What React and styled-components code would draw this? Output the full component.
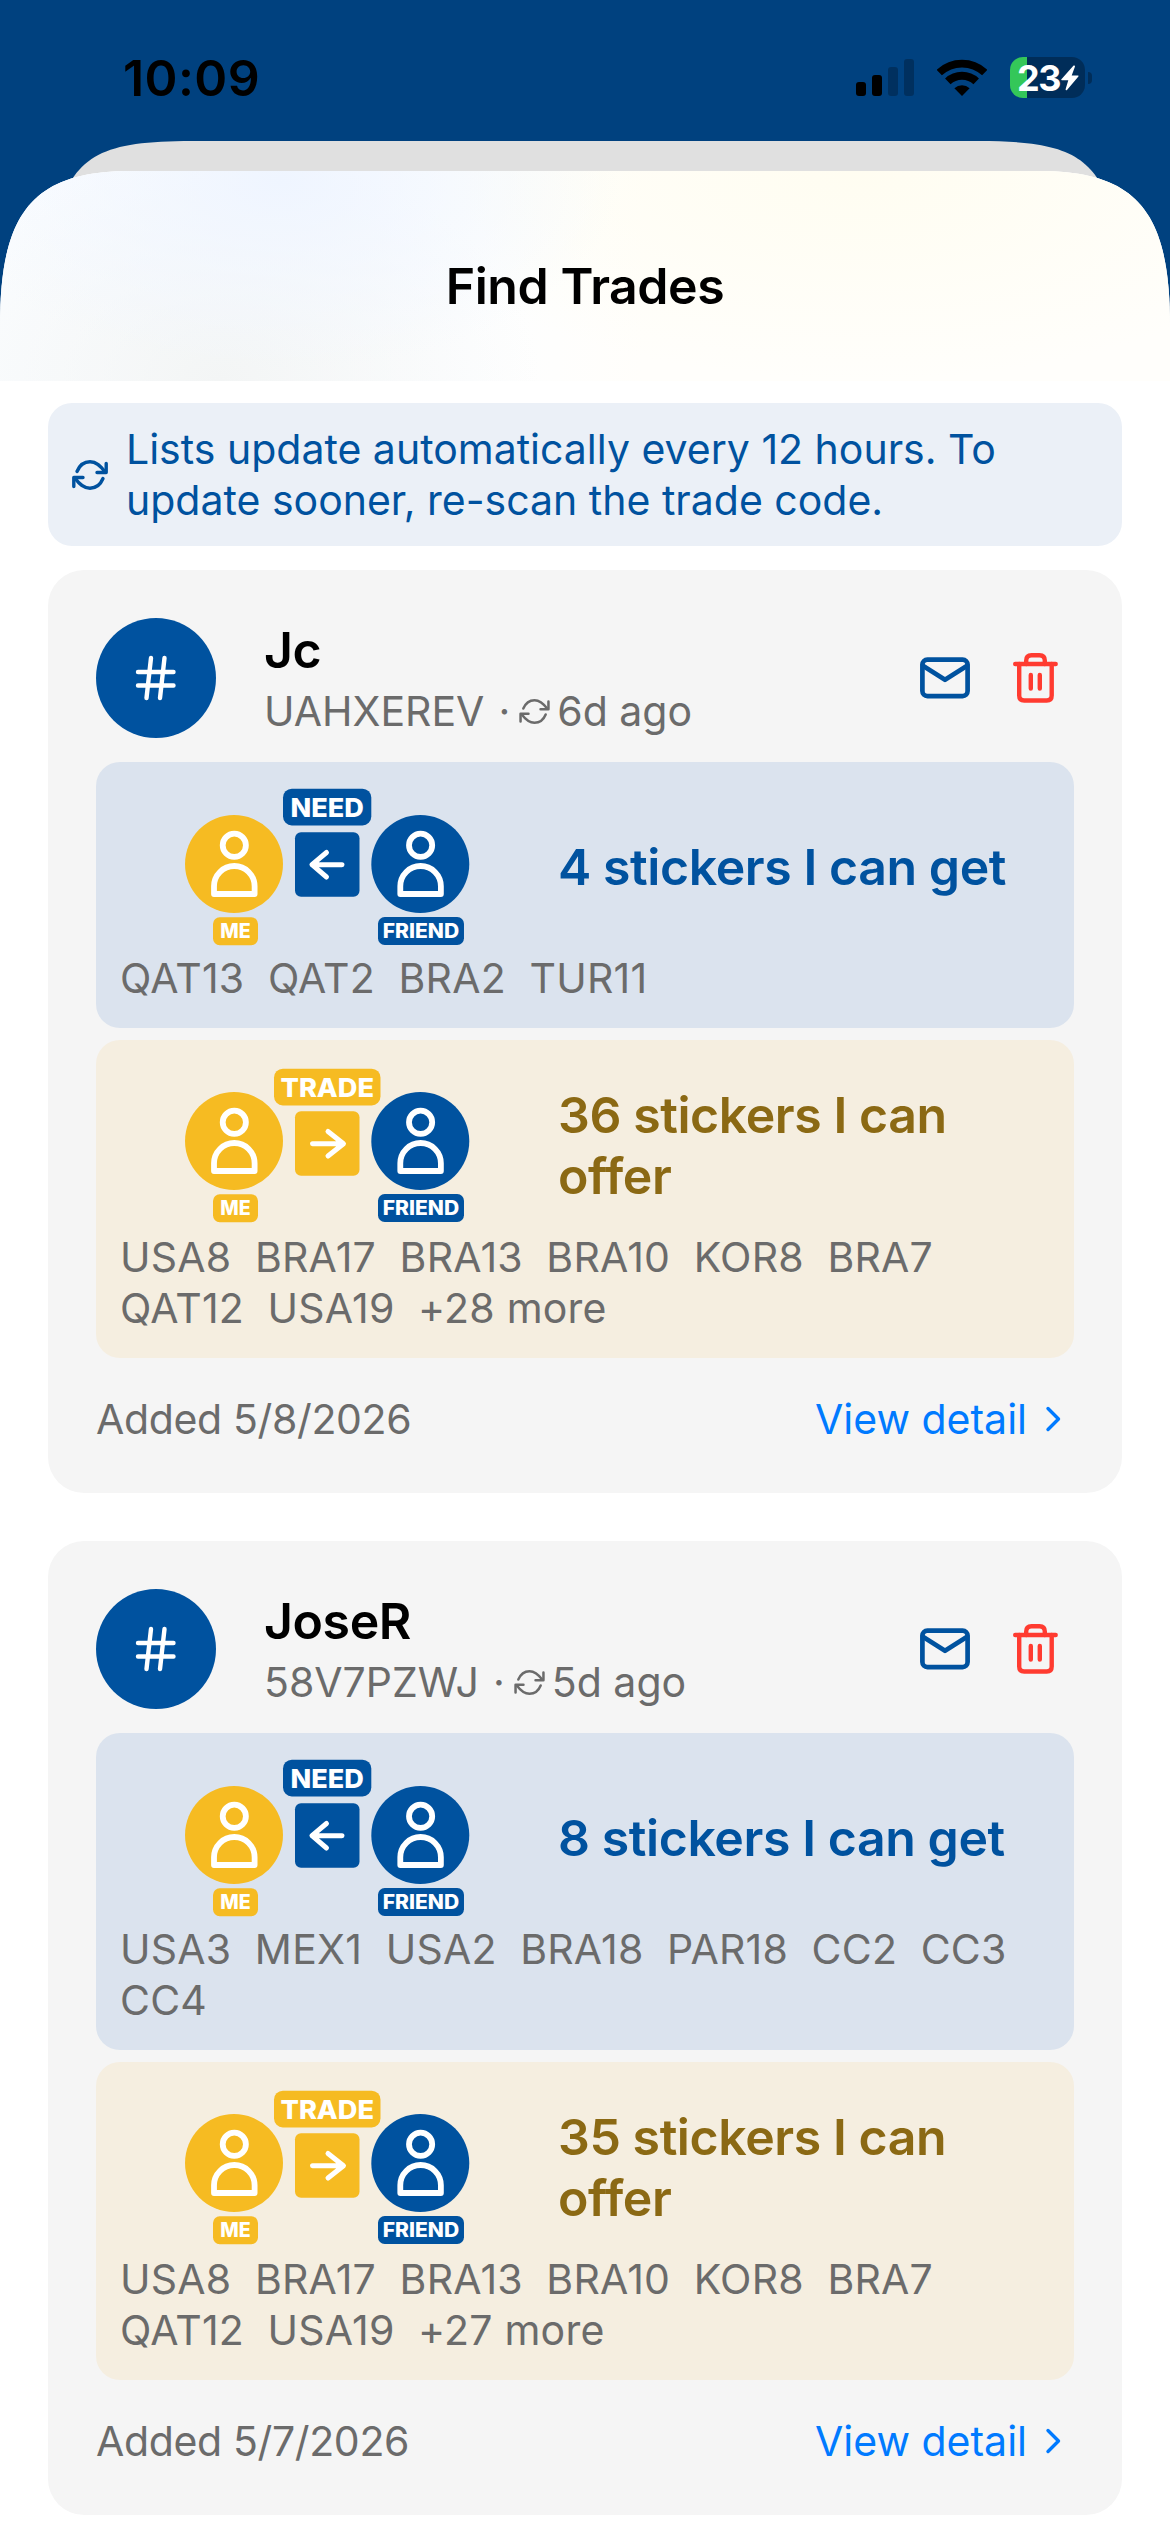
import React from "react";
import styled, { createGlobalStyle } from "styled-components";

const trades = [
  {
    name: "Jc",
    code: "UAHXEREV",
    synced: "6d ago",
    added: "5/8/2026",
    need: { title: "4 stickers I can get", codes: ["QAT13", "QAT2", "BRA2", "TUR11"] },
    offer: {
      title: "36 stickers I can offer",
      codes: ["USA8", "BRA17", "BRA13", "BRA10", "KOR8", "BRA7", "QAT12", "USA19", "+28 more"],
    },
  },
  {
    name: "JoseR",
    code: "58V7PZWJ",
    synced: "5d ago",
    added: "5/7/2026",
    need: {
      title: "8 stickers I can get",
      codes: ["USA3", "MEX1", "USA2", "BRA18", "PAR18", "CC2", "CC3", "CC4"],
    },
    offer: {
      title: "35 stickers I can offer",
      codes: ["USA8", "BRA17", "BRA13", "BRA10", "KOR8", "BRA7", "QAT12", "USA19", "+27 more"],
    },
  },
];

const BLUE = "#00529f";
const YELLOW = "#f6bb22";

const SignalIcon = () => (
  <svg width="58" height="38" viewBox="0 0 58 38">
    <rect x="0" y="23" width="10" height="14" rx="3" />
    <rect x="16" y="16" width="10" height="21" rx="3" />
    <rect x="32" y="8" width="10" height="29" rx="3" opacity="0.25" />
    <rect x="48" y="0" width="10" height="37" rx="3" opacity="0.25" />
  </svg>
);

const WifiIcon = () => (
  <svg width="50" height="38" viewBox="0 0 50 38">
    <g fill="none" stroke="#000">
      <path d="M2.3 13.6a33.2 33.2 0 0 1 45.4 0" strokeWidth="7.6" />
      <path d="M10.8 22.4a20.7 20.7 0 0 1 28.4 0" strokeWidth="8" />
    </g>
    <path d="M25 37l-7.6-7.8a11.4 11.4 0 0 1 15.2 0z" />
  </svg>
);

const BoltIcon = () => (
  <svg width="18" height="26" viewBox="0 0 18 26" fill="#fff">
    <path d="M12.6.6 0.4 14.2q-.6 1 .5 1h6.4L4.6 24.3q0 1.6 1.4.8L17.4 11.4q.6-1-.5-1h-6.2L14 1.4q0-1.4-1.4-.8z" />
  </svg>
);

const SyncIcon = ({ size, weight = 3 }) => (
  <svg
    width={size}
    height={size}
    viewBox="0 0 36 36"
    fill="none"
    stroke="currentColor"
    strokeWidth={weight}
    strokeLinecap="round"
    strokeLinejoin="round"
  >
    <path d="M5 14.5C7.500 8.500 12 4.800 18 4.800c6.500 0 10.500 4 15 10" />
    <path d="M34.200 6.500v9h-9.200" />
    <path d="M31 21.500C28.500 27.500 24 31.200 18 31.200c-6.500 0-10.500-4-15-10" />
    <path d="M1.800 29.500v-9h9.200" />
  </svg>
);

const HashIcon = () => (
  <svg width="42" height="46" viewBox="0 0 42 46" fill="none" stroke="#fff" strokeWidth="4.400" strokeLinecap="round">
    <path d="M3 17h35.500M3 30.500h35.500M16 3l-4.500 40M29.500 3L25 43" />
  </svg>
);

const MailIcon = () => (
  <svg width="50" height="42" viewBox="0 0 50 42" fill="none" stroke={BLUE} strokeWidth="4.700" strokeLinejoin="round">
    <rect x="2.400" y="2.600" width="45.200" height="36.500" rx="5" />
    <path d="M2.500 8.500L25 22.800 47.500 8.500" />
  </svg>
);

const TrashIcon = () => (
  <svg
    width="45"
    height="50"
    viewBox="0 0 45 50"
    fill="none"
    stroke="#ff3b30"
    strokeWidth="4.400"
    strokeLinecap="round"
    strokeLinejoin="round"
  >
    <path d="M2.200 11h40.500" />
    <path d="M13.200 11V7.500q0-5.300 5.300-5.300h8q5.300 0 5.300 5.300V11" />
    <path d="M6.200 11v31.500q0 5 5 5h22.500q5 0 5-5V11" />
    <path d="M17.800 22v13.500M26.800 22v13.500" />
  </svg>
);

const ChevronIcon = () => (
  <svg
    width="16"
    height="26"
    viewBox="0 0 16 26"
    fill="none"
    stroke="currentColor"
    strokeWidth="3.400"
    strokeLinecap="round"
    strokeLinejoin="round"
  >
    <path d="M3 2.500L13.500 13 3 23.500" />
  </svg>
);

const Person = ({ x, y, color }) => (
  <g transform={`translate(${x} ${y})`}>
    <circle r="49" fill={color} />
    <g fill="none" stroke="#fff" strokeWidth="5.800" strokeLinejoin="round">
      <circle cx="0.300" cy="-18.700" r="11.600" />
      <path d="M-20 30V22.300a20.300 20.300 0 0 1 40.600 0V30z" />
    </g>
  </g>
);

const Tag = ({ x, y, width, height, color, size, inset, children }) => (
  <g>
    <rect x={x} y={y} width={width} height={height} rx={height * 0.24} fill={color} />
    <TagText
      x={x + inset}
      y={y + height / 2 + size * 0.364}
      fontSize={size}
      textLength={width - inset * 2}
      lengthAdjust="spacingAndGlyphs"
    >
      {children}
    </TagText>
  </g>
);

// who gives a sticker to whom: me on the left, friend on the right
const TradeGraphic = ({ offer }) => {
  const y = offer ? 77 : 78;
  const color = offer ? YELLOW : BLUE;
  return (
    <svg width="414" height="161.400" viewBox="0 0 414 161.400">
      <Person x={114} y={y} color={YELLOW} />
      <Person x={300.3} y={y} color={BLUE} />
      <rect x="175" y={offer ? 47.3 : 46.3} width="64.500" height="64.500" rx="6" fill={color} />
      <path
        d={offer ? "M192.500 79.700h30M208 67.500l15.500 12.200L208 92" : "M222 78.700h-30M206.500 66.500L192 78.700 206.500 91"}
        fill="none"
        stroke="#fff"
        strokeWidth="5"
        strokeLinecap="round"
        strokeLinejoin="round"
      />
      {offer ? (
        <Tag x={154} y={4.7} width={106.5} height={36.7} color={color} size={26} inset={6.5}>
          TRADE
        </Tag>
      ) : (
        <Tag x={163} y={2.7} width={88.3} height={36.7} color={color} size={26} inset={7.5}>
          NEED
        </Tag>
      )}
      <Tag x={93} y={y + 53.3} width={45} height={28} color={YELLOW} size={19.5} inset={7.3}>
        ME
      </Tag>
      <Tag x={258} y={y + 53} width={86} height={28} color={BLUE} size={19.5} inset={4.8}>
        FRIEND
      </Tag>
    </svg>
  );
};

const StickerPanel = ({ offer, title, codes }) => (
  <Panel $offer={offer}>
    <PanelTop>
      <TradeGraphic offer={offer} />
      <PanelTitle $offer={offer}>{title}</PanelTitle>
    </PanelTop>
    <Codes>{codes.join("  ")}</Codes>
  </Panel>
);

const TradeCard = ({ trade }) => (
  <Card>
    <CardHeader>
      <Avatar>
        <HashIcon />
      </Avatar>
      <Who>
        <Name>{trade.name}</Name>
        <Meta>
          <span>{trade.code}</span>
          <Dot>·</Dot>
          <SyncIcon size={31} weight={2.9} />
          <span>{trade.synced}</span>
        </Meta>
      </Who>
      <Actions>
        <MailIcon />
        <TrashIcon />
      </Actions>
    </CardHeader>
    <Panels>
      <StickerPanel {...trade.need} />
      <StickerPanel offer {...trade.offer} />
    </Panels>
    <CardFooter>
      <Added>Added {trade.added}</Added>
      <DetailLink>
        View detail
        <ChevronIcon />
      </DetailLink>
    </CardFooter>
  </Card>
);

const App = () => {
  return (
    <Screen>
      <GlobalStyle />
      <StatusBar>
        <Time>10:09</Time>
        <StatusIcons>
          <SignalIcon />
          <WifiIcon />
          <BatteryWrap>
            <Battery>
              23
              <BoltIcon />
            </Battery>
            <BatteryTip />
          </BatteryWrap>
        </StatusIcons>
      </StatusBar>
      <BackSheet />
      <Sheet>
        <SheetHeader>Find Trades</SheetHeader>
        <Content>
          <Notice>
            <SyncIcon size={36} weight={3.4} />
            <span>
              Lists update automatically every 12 hours. To update sooner, re-scan the trade code.
            </span>
          </Notice>
          <CardList>
            {trades.map((trade) => (
              <TradeCard key={trade.code} trade={trade} />
            ))}
          </CardList>
        </Content>
      </Sheet>
    </Screen>
  );
};

const GlobalStyle = createGlobalStyle`
  * {
    box-sizing: border-box;
  }

  body {
    margin: 0;
    background: #00417f;
    font-family: Inter, "Liberation Sans", sans-serif;
    -webkit-font-smoothing: antialiased;
  }

  svg {
    display: block;
    flex-shrink: 0;
  }
`;

const Screen = styled.div`
  width: 1170px;
  height: 2532px;
  overflow: hidden;
  display: flex;
  flex-direction: column;
  background: #00417f;
`;

const StatusBar = styled.div`
  height: 141px;
  flex-shrink: 0;
  display: flex;
  justify-content: space-between;
  align-items: flex-start;
  padding: 48px 78px 0 123px;
`;

const Time = styled.div`
  font-size: 50px;
  font-weight: 600;
  line-height: 61px;
  letter-spacing: 0.4px;
`;

const StatusIcons = styled.div`
  display: flex;
  align-items: center;
  gap: 23px;
  margin-top: 9px;
`;

const BatteryWrap = styled.div`
  display: flex;
  align-items: center;
  gap: 3px;
`;

const Battery = styled.div`
  width: 75px;
  height: 41px;
  border-radius: 13px;
  display: flex;
  align-items: center;
  gap: 1px;
  padding-left: 7px;
  background: linear-gradient(to right, #34c759 17px, #002d59 17px);
  color: #fff;
  font-size: 36px;
  font-weight: 700;
  letter-spacing: -1.5px;
`;

const BatteryTip = styled.div`
  width: 4px;
  height: 12px;
  border-radius: 0 4px 4px 0;
  background: #002d59;
`;

const BackSheet = styled.div`
  height: 60px;
  flex-shrink: 0;
  margin: 0 57px -30px;
  background: #e0e0e0;
  clip-path: path("M0 70C20 14 45 0 135 0H921C1011 0 1036 14 1056 70Z");
`;

const Sheet = styled.div`
  flex: 1;
  position: relative;
  background: #fff;
  clip-path: path("M0 155C0 45 30 0 130 0H1040C1140 0 1170 45 1170 155V2400H0Z");
`;

const SheetHeader = styled.div`
  height: 210px;
  padding-top: 85px;
  text-align: center;
  font-size: 50px;
  font-weight: 600;
  line-height: 61px;
  letter-spacing: -0.45px;
  background:
    radial-gradient(ellipse 340px 190px at 280px 10px, #eff5ff, transparent),
    radial-gradient(ellipse 320px 230px at 220px 210px, #f3f5f5, transparent),
    radial-gradient(ellipse 480px 210px at 860px 0, #fffdf1, transparent),
    linear-gradient(to right, #fbfdff, #fdfeff 40%, #fffefb 55%, #fffefb);
`;

const Content = styled.div`
  padding: 22px 48px 0;
`;

const Notice = styled.div`
  display: flex;
  align-items: center;
  gap: 18px;
  height: 143px;
  padding: 0 24px;
  border-radius: 24px;
  background: #ebf0f7;
  color: ${BLUE};
  font-size: 41px;
  line-height: 51px;
`;

const CardList = styled.div`
  display: flex;
  flex-direction: column;
  gap: 48px;
  margin-top: 24px;
`;

const Card = styled.div`
  padding: 48px;
  border-radius: 36px;
  background: #f5f5f5;
`;

const CardHeader = styled.div`
  display: flex;
  align-items: center;
  height: 120px;
`;

const Avatar = styled.div`
  width: 120px;
  height: 120px;
  border-radius: 50%;
  display: flex;
  align-items: center;
  justify-content: center;
  background: ${BLUE};
`;

const Who = styled.div`
  flex: 1;
  display: flex;
  flex-direction: column;
  gap: 5px;
  margin-left: 48px;
  padding-top: 1px;
`;

const Name = styled.div`
  font-size: 50px;
  font-weight: 600;
  line-height: 61px;
  letter-spacing: -0.4px;
`;

const Meta = styled.div`
  display: flex;
  align-items: center;
  gap: 7px;
  color: #6b6b6b;
  font-size: 41px;
  line-height: 51px;
`;

const Dot = styled.span`
  margin: 0 2px 0 7px;
`;

const Actions = styled.div`
  display: flex;
  align-items: center;
  gap: 43px;
  margin-right: 16px;
`;

const Panels = styled.div`
  display: flex;
  flex-direction: column;
  gap: 12px;
  margin-top: 24px;
`;

const Panel = styled.div`
  padding: 24px;
  border-radius: 24px;
  background: ${(props) => (props.$offer ? "#f5eee0" : "#dbe3ee")};
`;

const PanelTop = styled.div`
  display: flex;
  align-items: center;
  gap: 24px;
`;

const PanelTitle = styled.div`
  flex: 1;
  padding-top: 2px;
  color: ${(props) => (props.$offer ? "#8b6914" : BLUE)};
  font-size: 50px;
  font-weight: 600;
  line-height: 61px;
  letter-spacing: -0.42px;
`;

const Codes = styled.div`
  margin-top: 6px;
  color: #6b6b6b;
  font-size: 41px;
  line-height: 51px;
  letter-spacing: 0.23px;
  white-space: pre-wrap;
`;

const CardFooter = styled.div`
  display: flex;
  justify-content: space-between;
  align-items: center;
  margin-top: 36px;
  color: #6b6b6b;
  font-size: 41px;
  line-height: 51px;
`;

const Added = styled.span`
  letter-spacing: -0.35px;
`;

const DetailLink = styled.a`
  display: flex;
  align-items: center;
  gap: 18px;
  padding-right: 13px;
  color: #007aff;
`;

const TagText = styled.text`
  fill: #fff;
  font-family: Inter, "Liberation Sans", sans-serif;
  font-weight: 800;
`;

export default App;
